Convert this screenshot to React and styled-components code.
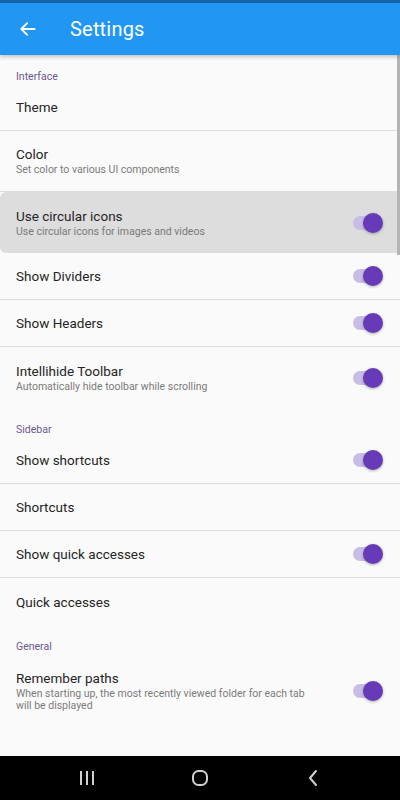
import React from "react";
import styled, { createGlobalStyle } from "styled-components";

const GlobalStyle = createGlobalStyle`
  html, body {
    margin: 0;
    padding: 0;
    background: #fafafa;
  }
  body {
    font-family: Roboto, "Noto Sans", sans-serif;
  }
`;

const Screen = styled.div`
  position: relative;
  width: 400px;
  height: 800px;
  display: flex;
  flex-direction: column;
  background: #fafafa;
  overflow: hidden;
`;

const StatusStrip = styled.div`
  height: 3px;
  background: #1565a8;
`;

const AppBar = styled.header`
  height: 52px;
  display: flex;
  align-items: center;
  background: #2196f3;
  box-shadow: 0 2px 4px rgba(0, 0, 0, 0.22);
  z-index: 2;
`;

const BackButton = styled.div`
  width: 56px;
  height: 52px;
  display: flex;
  align-items: center;
  justify-content: center;
`;

const Title = styled.h1`
  margin: 0 0 0 14px;
  color: #fff;
  font-size: 20px;
  font-weight: 400;
  letter-spacing: 0.2px;
`;

const List = styled.main`
  flex: 1;
  display: flex;
  flex-direction: column;
`;

const SectionHeader = styled.div`
  height: 29px;
  box-sizing: border-box;
  padding: 15px 16px 0;
  font-size: 10.5px;
  color: #6a5890;
`;

const Row = styled.div`
  display: flex;
  align-items: center;
  box-sizing: border-box;
  min-height: ${(p) => (p.$tall ? 61 : 47)}px;
  padding: ${(p) => (p.$multi ? "16px 17px 10px 16px" : "0 17px 0 16px")};
  background: ${(p) => (p.$active ? "#dddddd" : "transparent")};
  border-radius: ${(p) => (p.$active ? "6px 0 0 6px" : "0")};
  border-bottom: ${(p) => (p.$divider ? "1px solid #dedede" : "none")};
`;

const Texts = styled.div`
  flex: 1;
  display: flex;
  flex-direction: column;
  padding-right: ${(p) => (p.$narrow ? "30px" : "0")};
`;

const RowTitle = styled.div`
  font-size: 13.5px;
  color: #252525;
  line-height: 16px;
`;

const RowSub = styled.div`
  font-size: 10.5px;
  color: #7a7a7a;
  line-height: 12px;
  margin-top: 2px;
`;

const Switch = styled.div`
  position: relative;
  width: 32px;
  height: 20px;
  flex: none;
`;

const Track = styled.div`
  position: absolute;
  left: 2px;
  top: 3px;
  width: 26px;
  height: 14px;
  border-radius: 7px;
  background: #c9bde6;
`;

const Thumb = styled.div`
  position: absolute;
  right: 0;
  top: 0;
  width: 20px;
  height: 20px;
  border-radius: 50%;
  background: #673ab7;
  box-shadow: 0 1px 3px rgba(0, 0, 0, 0.3);
`;

const Scrollbar = styled.div`
  position: absolute;
  right: 0;
  top: 55px;
  width: 3px;
  height: 200px;
  background: #b5b5b5;
`;

const NavBar = styled.nav`
  height: 44px;
  background: #000;
  display: flex;
  align-items: center;
  justify-content: space-between;
  padding: 0 72px;
`;

const NavIcon = styled.div`
  width: 30px;
  display: flex;
  justify-content: center;
`;

const Toggle = () => (
  <Switch>
    <Track />
    <Thumb />
  </Switch>
);

const Item = ({ title, sub, toggle, divider = true, active, narrow }) => (
  <Row $tall={!!sub} $multi={narrow} $divider={divider} $active={active}>
    <Texts $narrow={narrow}>
      <RowTitle>{title}</RowTitle>
      {sub && <RowSub>{sub}</RowSub>}
    </Texts>
    {toggle && <Toggle />}
  </Row>
);

export default function App() {
  return (
    <Screen>
      <GlobalStyle />
      <StatusStrip />
      <AppBar>
        <BackButton>
          <svg width="20" height="20" viewBox="0 0 24 24" fill="none" stroke="#fff" strokeWidth="2.2" strokeLinecap="round" strokeLinejoin="round">
            <path d="M20 12H4.5" />
            <path d="M11 5l-7 7 7 7" />
          </svg>
        </BackButton>
        <Title>Settings</Title>
      </AppBar>
      <List>
        <SectionHeader>Interface</SectionHeader>
        <Item title="Theme" />
        <Item title="Color" sub="Set color to various UI components" />
        <Item title="Use circular icons" sub="Use circular icons for images and videos" toggle active divider={false} />
        <Item title="Show Dividers" toggle />
        <Item title="Show Headers" toggle />
        <Item title="Intellihide Toolbar" sub="Automatically hide toolbar while scrolling" toggle divider={false} />
        <SectionHeader>Sidebar</SectionHeader>
        <Item title="Show shortcuts" toggle />
        <Item title="Shortcuts" />
        <Item title="Show quick accesses" toggle />
        <Item title="Quick accesses" divider={false} />
        <SectionHeader>General</SectionHeader>
        <Item
          title="Remember paths"
          sub="When starting up, the most recently viewed folder for each tab will be displayed"
          toggle
          narrow
          divider={false}
        />
      </List>
      <NavBar>
        <NavIcon>
          <svg width="18" height="16" viewBox="0 0 18 16" fill="#d0d0d0">
            <rect x="2" y="1" width="2" height="14" />
            <rect x="8" y="1" width="2" height="14" />
            <rect x="14" y="1" width="2" height="14" />
          </svg>
        </NavIcon>
        <NavIcon>
          <svg width="18" height="18" viewBox="0 0 18 18" fill="none" stroke="#d0d0d0" strokeWidth="2">
            <rect x="2" y="2" width="14" height="14" rx="5.5" />
          </svg>
        </NavIcon>
        <NavIcon>
          <svg width="14" height="18" viewBox="0 0 14 18" fill="none" stroke="#d0d0d0" strokeWidth="2" strokeLinecap="round" strokeLinejoin="round">
            <path d="M10 2L4 9l6 7" />
          </svg>
        </NavIcon>
      </NavBar>
      <Scrollbar />
    </Screen>
  );
}
